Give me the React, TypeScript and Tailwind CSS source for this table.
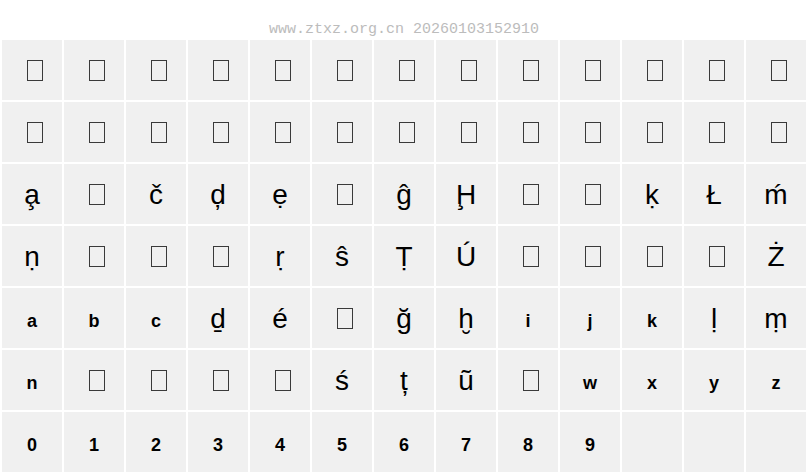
const T = "__tofu__";

// each row has 13 cells; "" = empty cell
const rows: string[][] = [
  Array(13).fill(T),
  Array(13).fill(T),
  ["a\u0327", T, "č", "ḑ", "ẹ", T, "ĝ", "Ḩ", T, T, "ḳ", "Ł", "ḿ"],
  ["ṇ", T, T, T, "ṛ", "ŝ", "Ṭ", "Ú", T, T, T, T, "Ż"],
  ["a", "b", "c", "ḏ", "é", T, "ğ", "ḫ", "i", "j", "k", "ḷ", "ṃ"],
  ["n", T, T, T, T, "ś", "ț", "ũ", T, "w", "x", "y", "z"],
  ["0", "1", "2", "3", "4", "5", "6", "7", "8", "9", "", "", ""],
];

const plain = /^[a-z0-9]$/;

const Cell = ({ ch }: { ch: string }) => {
  if (ch === T) {
    return (
      <div className="flex h-[60px] items-center justify-center bg-[#f0f0f0]">
        <span className="ml-[6px] inline-block h-[21px] w-[16px] border border-[#3a3a3a]" />
      </div>
    );
  }
  if (plain.test(ch)) {
    return (
      <div className="flex h-[60px] items-center justify-center bg-[#f0f0f0] pt-[6px] font-['Liberation_Sans',Arial,sans-serif] text-[18px] font-bold text-black">
        {ch}
      </div>
    );
  }
  return (
    <div className="flex h-[60px] items-center justify-center bg-[#f0f0f0] pt-[2px] font-['Liberation_Sans','DejaVu_Sans',sans-serif] text-[28px] leading-none text-black">
      {ch}
    </div>
  );
};

export default function App() {
  return (
    <div className="h-[476px] w-[808px] overflow-hidden bg-white">
      {/* Header */}
      <div className="flex h-[38px] items-end justify-center pb-[1px] font-['Liberation_Mono',monospace] text-[15px] leading-[15px] text-[#bcbcbc]">
        www.ztxz.org.cn 20260103152910
      </div>

      {/* Glyph grid */}
      <div className="grid grid-cols-[repeat(13,60px)] gap-[2px] p-[2px]">
        {rows.map((row, r) =>
          row.map((ch, c) => <Cell key={`${r}-${c}`} ch={ch} />)
        )}
      </div>
    </div>
  );
}
